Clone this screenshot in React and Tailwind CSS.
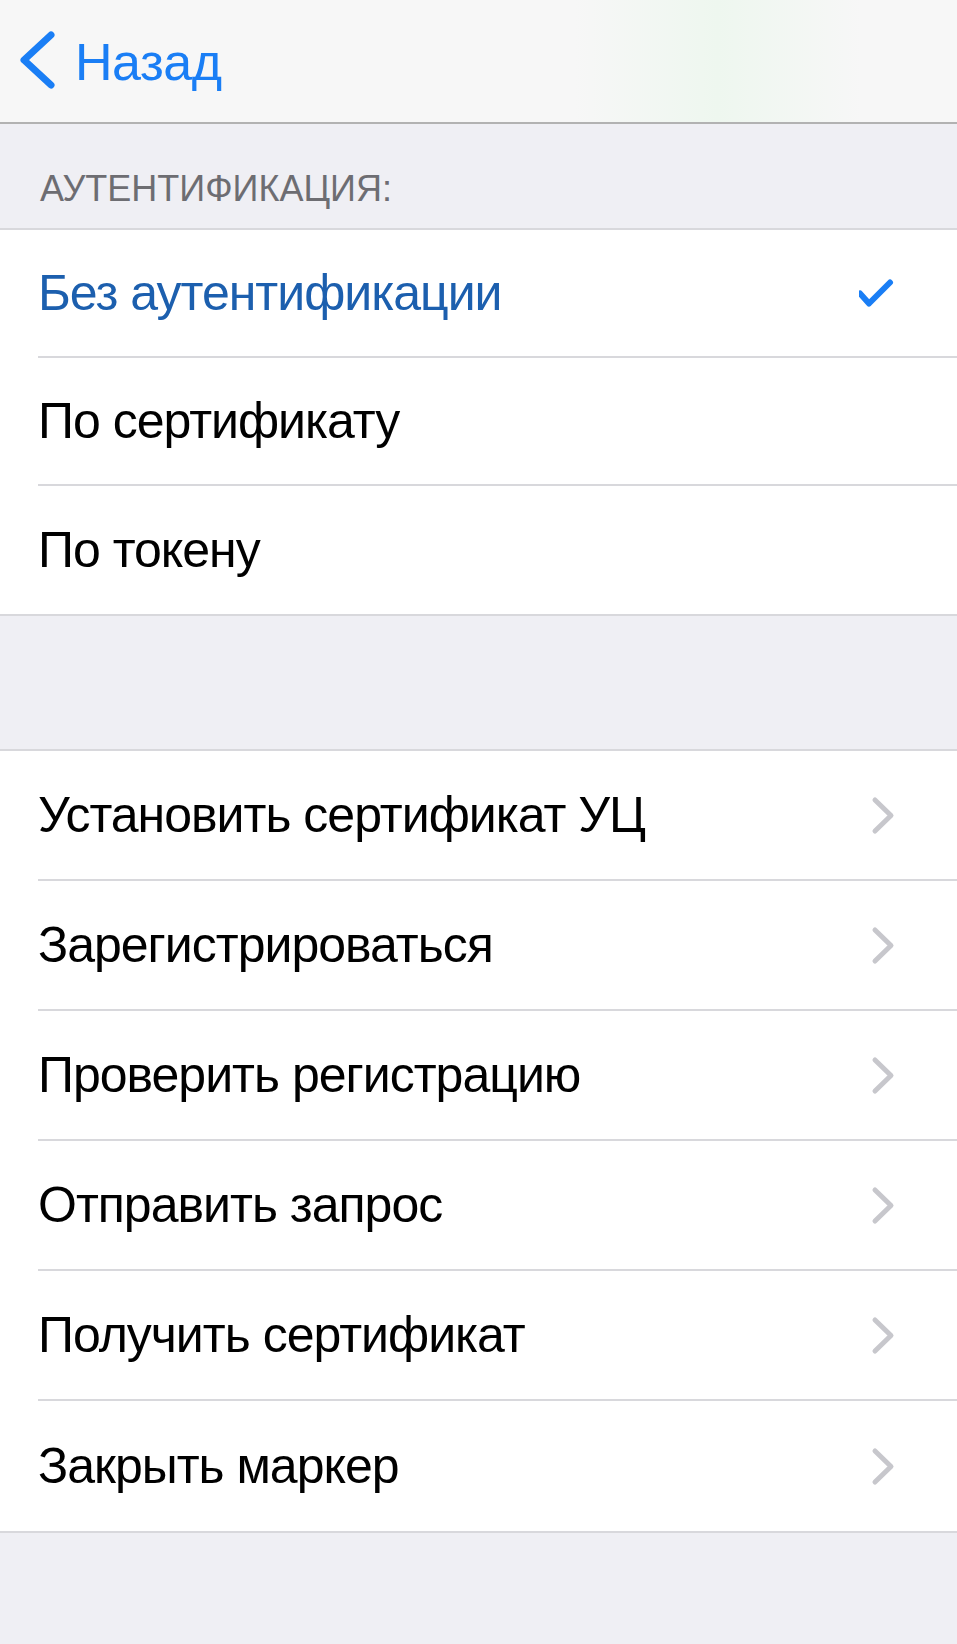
import React from 'react';

const authOptions = [
  { label: 'Без аутентификации', selected: true },
  { label: 'По сертификату' },
  { label: 'По токену' },
];

const actions = [
  'Установить сертификат УЦ',
  'Зарегистрироваться',
  'Проверить регистрацию',
  'Отправить запрос',
  'Получить сертификат',
  'Закрыть маркер',
];

const Check = () => (
  <svg width="40" height="32" viewBox="0 0 40 32" className="shrink-0">
    <path d="M1 16.5 L10 26.5 L31 5.5" fill="none" stroke="#1a7ef5" strokeWidth="6" strokeLinecap="round" strokeLinejoin="round" />
  </svg>
);

const Chevron = () => (
  <svg width="40" height="40" viewBox="0 0 40 40" className="shrink-0">
    <path d="M16 5 L32 20.5 L16 36" fill="none" stroke="#c7c7cc" strokeWidth="5" strokeLinecap="round" strokeLinejoin="round" />
  </svg>
);

// rows in the first group are a touch shorter than in the second
const Row = ({ label, last, selected, chevron, tall }) => (
  <div className="pl-[38px]">
    <div className={`flex items-center justify-between pr-[58px] ${tall ? 'h-[130px]' : 'h-[128px]'} ${last ? '' : 'border-b-2 border-[#d8d8dc]'}`}>
      <span className={`text-[50px] tracking-[-1px] ${selected ? 'text-[#1c5fae]' : 'text-black'}`}>{label}</span>
      {selected && <Check />}
      {chevron && <Chevron />}
    </div>
  </div>
);

export default function App() {
  return (
    <div className="w-[957px] h-[1644px] bg-[#efeff4] overflow-hidden" style={{ fontFamily: '"Liberation Sans", Arial, sans-serif' }}>
      {/* nav */}
      <div className="h-[124px] bg-[linear-gradient(90deg,#f7f7f7_0%,#f7f7f7_60%,#eef7ef_75%,#f7f7f7_90%)] border-b-2 border-[#b2b2b2] flex items-center pl-[18px]">
        <svg width="44" height="60" viewBox="0 0 44 60" className="shrink-0">
          <path d="M33 4 L6 29 L33 54" fill="none" stroke="#1a7ef5" strokeWidth="7" strokeLinecap="round" strokeLinejoin="round" />
        </svg>
        <span className="ml-[13px] text-[52px] tracking-[-0.5px] text-[#1a7ef5] leading-none mt-[2px]">Назад</span>
      </div>

      {/* header */}
      <div className="h-[104px] flex items-end pl-[40px] pb-[12px]">
        <span className="text-[36px] text-[#6d6d72]">АУТЕНТИФИКАЦИЯ:</span>
      </div>

      <div className="bg-white border-y-2 border-[#d8d8dc]">
        {authOptions.map((o, i) => (
          <Row key={o.label} label={o.label} selected={o.selected} last={i === authOptions.length - 1} />
        ))}
      </div>

      <div className="h-[133px]" />

      <div className="bg-white border-y-2 border-[#d8d8dc]">
        {actions.map((a, i) => (
          <Row key={a} label={a} chevron tall last={i === actions.length - 1} />
        ))}
      </div>
    </div>
  );
}
